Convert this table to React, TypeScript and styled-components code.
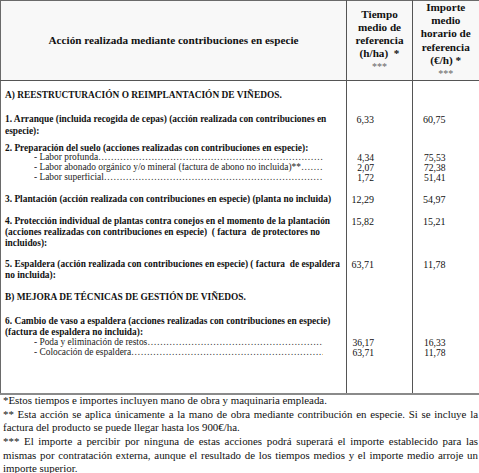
import React from "react";
import styled, { createGlobalStyle } from "styled-components";

const GlobalStyle = createGlobalStyle`
  html, body {
    margin: 0;
    padding: 0;
    background: #ffffff;
  }
  body {
    font-family: "Liberation Serif", "Times New Roman", serif;
    color: #111;
  }
  *, *::before, *::after {
    box-sizing: border-box;
  }
`;

type SubItem = { label: string; t: string; i: string };

type Row = {
  pad: number;
  text?: string;
  bold?: boolean;
  t?: string;
  i?: string;
  subs?: SubItem[];
  subPad?: number;
};

// filas del cuerpo
const rows: Row[] = [
  { pad: 9, text: "A) REESTRUCTURACIÓN O REIMPLANTACIÓN DE VIÑEDOS.", bold: true },
  {
    pad: 13,
    text: "1. Arranque (incluida recogida de cepas) (acción realizada con contribuciones en especie):",
    bold: true,
    t: "6,33",
    i: "60,75",
  },
  {
    pad: 6,
    text: "2. Preparación del suelo (acciones realizadas con contribuciones en especie):",
    bold: true,
    subPad: -1,
    subs: [
      { label: "- Labor profunda", t: "4,34", i: "75,53" },
      { label: "- Labor abonado orgánico y/o mineral (factura de abono no incluida)**", t: "2,07", i: "72,38" },
      { label: "- Labor superficial", t: "1,72", i: "51,41" },
    ],
  },
  {
    pad: 12,
    text: "3. Plantación (acción realizada con contribuciones en especie) (planta no incluida)",
    bold: true,
    t: "12,29",
    i: "54,97",
  },
  {
    pad: 10,
    text: "4. Protección individual de plantas contra conejos en el momento de la plantación (acciones realizadas con contribuciones en especie)\u00a0 ( factura\u00a0 de protectores no incluidos):",
    bold: true,
    t: "15,82",
    i: "15,21",
  },
  {
    pad: 10,
    text: "5. Espaldera (acción realizada con contribuciones en especie) ( factura\u00a0 de espaldera no incluida):",
    bold: true,
    t: "63,71",
    i: "11,78",
  },
  { pad: 10, text: "B) MEJORA DE TÉCNICAS DE GESTIÓN DE VIÑEDOS.", bold: true },
  {
    pad: 13,
    text: "6. Cambio de vaso a espaldera (acciones realizadas con contribuciones en especie) (factura de espaldera no incluida):",
    bold: true,
    subPad: 0,
    subs: [
      { label: "- Poda y eliminación de restos", t: "36,17", i: "16,33" },
      { label: "- Colocación de espaldera", t: "63,71", i: "11,78" },
    ],
  },
];

const dots = "…".repeat(60);

const LH = 11.2;
const SUB_LH = 9.8;

const Page = styled.div`
  width: 479px;
  font-family: "Liberation Serif", "Times New Roman", serif;
`;

const Table = styled.table`
  width: 479px;
  border-collapse: collapse;
  table-layout: fixed;
  font-family: "Liberation Serif", "Times New Roman", serif;
  color: #111;
  border: 1px solid #6a6a6a;
  border-right: 2px solid #9a9a9a;
  border-bottom: 2px solid #8a8a8a;
`;

const HeadRow = styled.tr`
  background: #f8f8f8;
  border-bottom: 1px solid #555;
`;

const HeadCell = styled.th`
  height: 77px;
  padding: 0 2px;
  font-size: 11.2px;
  line-height: 13.2px;
  font-weight: bold;
  text-align: center;
  vertical-align: middle;
  border-left: 1px solid #555;
  &:first-child {
    border-left: none;
  }
`;

const Stars = styled.span`
  font-weight: normal;
  color: #666;
  font-size: 10px;
`;

const Cell = styled.td<{ $pad: number; $last?: boolean }>`
  padding: ${(p) => p.$pad}px 4px ${(p) => (p.$last ? 35 : 0)}px 4px;
  font-size: 9.4px;
  line-height: ${LH}px;
  vertical-align: top;
  border-left: 1px solid #555;
  &:first-child {
    border-left: none;
  }
`;

const Text = styled.div<{ $bold?: boolean }>`
  font-weight: ${(p) => (p.$bold ? "bold" : "normal")};
`;

const NumCell = styled(Cell)<{ $right: number }>`
  text-align: right;
  padding-right: ${(p) => p.$right}px;
  font-size: 10px;
`;

const SubBlock = styled.div<{ $top: number }>`
  margin-top: ${(p) => p.$top}px;
`;

const SubLine = styled.div`
  display: flex;
  width: 289px;
  margin-left: 29px;
  line-height: ${SUB_LH}px;
  white-space: nowrap;
  overflow: hidden;
  color: #222;
`;

const Leader = styled.span`
  flex: 1;
  overflow: hidden;
  color: #333;
`;

const Num = styled.div<{ $lh?: number }>`
  line-height: ${(p) => p.$lh ?? LH}px;
`;

const SubNum = styled(Num)`
  font-size: 9.6px;
`;

const Footer = styled.div`
  margin-top: -1px;
  padding: 0 1px 0 3px;
  font-size: 10.9px;
  line-height: 13.7px;
  text-align: justify;
  color: #111;
`;

export default function App() {
  return (
    <Page>
      <GlobalStyle />
      <Table>
        <colgroup>
          <col style={{ width: 346 }} />
          <col style={{ width: 66 }} />
          <col style={{ width: 67 }} />
        </colgroup>
        <thead>
          <HeadRow>
            <HeadCell>Acción realizada mediante contribuciones en especie</HeadCell>
            <HeadCell>
              Tiempo medio de referencia (h/ha)&nbsp; *<br />
              <Stars>***</Stars>
            </HeadCell>
            <HeadCell>
              Importe medio horario de referencia (€/h) *<br />
              <Stars>***</Stars>
            </HeadCell>
          </HeadRow>
        </thead>
        <tbody>
          {rows.map((r, idx) => {
            const last = idx === rows.length - 1;
            const lines = r.text && r.text.length > 100 ? 2 : 1;
            const numTop = LH * lines + (r.subPad ?? 0);
            return (
              <tr key={idx}>
                <Cell $pad={r.pad} $last={last}>
                  <Text $bold={r.bold}>{r.text}</Text>
                  {r.subs && (
                    <SubBlock $top={r.subPad ?? 0}>
                      {r.subs.map((s) => (
                        <SubLine key={s.label}>
                          <span>{s.label}</span>
                          <Leader>{dots}</Leader>
                        </SubLine>
                      ))}
                    </SubBlock>
                  )}
                </Cell>
                <NumCell $pad={r.pad} $last={last} $right={38}>
                  {r.t && <Num>{r.t}</Num>}
                  {r.subs && (
                    <SubBlock $top={numTop}>
                      {r.subs.map((s) => (
                        <SubNum key={s.label} $lh={SUB_LH}>{s.t}</SubNum>
                      ))}
                    </SubBlock>
                  )}
                </NumCell>
                <NumCell $pad={r.pad} $last={last} $right={33}>
                  {r.i && <Num>{r.i}</Num>}
                  {r.subs && (
                    <SubBlock $top={numTop}>
                      {r.subs.map((s) => (
                        <SubNum key={s.label} $lh={SUB_LH}>{s.i}</SubNum>
                      ))}
                    </SubBlock>
                  )}
                </NumCell>
              </tr>
            );
          })}
        </tbody>
      </Table>
      <Footer>
        *Estos tiempos e importes incluyen mano de obra y maquinaria empleada.
        <br />
        ** Esta acción se aplica únicamente a la mano de obra mediante contribución en especie. Si se incluye la factura del producto se puede llegar hasta los 900€/ha.
        <br />
        *** El importe a percibir por ninguna de estas acciones podrá superará el importe establecido para las mismas por contratación externa, aunque el resultado de los tiempos medios y el importe medio arroje un importe superior.
      </Footer>
    </Page>
  );
}
